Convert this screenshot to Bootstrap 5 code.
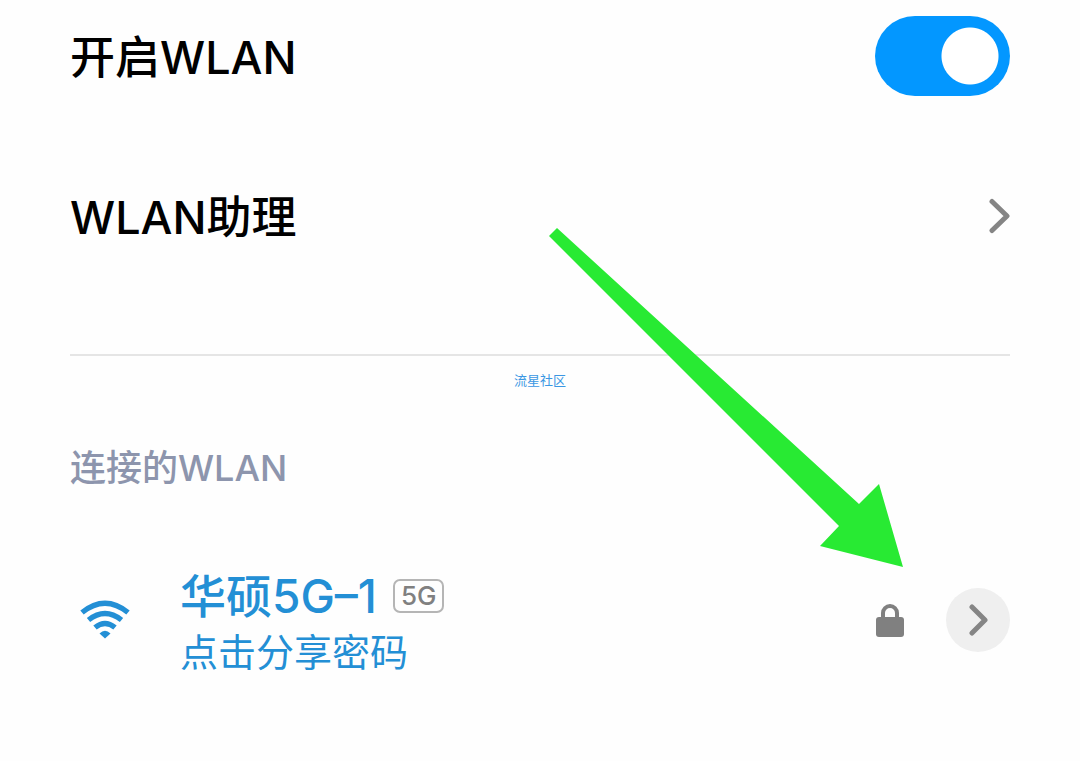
<!DOCTYPE html>
<html lang="zh-CN">
<head>
<meta charset="utf-8">
<meta name="viewport" content="width=device-width, initial-scale=1">
<title>WLAN</title>
<link href="https://cdn.jsdelivr.net/npm/bootstrap@5.3.0/dist/css/bootstrap.min.css" rel="stylesheet">
<style>
  body { font-family: Inter, "Noto Sans CJK SC", sans-serif; background: #fefefe; color: #000; }
  .settings { padding: 0 70px; }
  .setting-title { font-size: 45px; line-height: 60px; padding-top: 4px; font-weight: 500; }
  .row-switch { min-height: 112px; }
  .row-assist { min-height: 208px; margin-bottom: 34px; color: #000; }
  .divider { border-top: 2px solid #e5e5e5; opacity: 1; }
  .form-check-input.wlan-switch {
    width: 135px; height: 80px; margin: 0; border: 0; border-radius: 40px;
    background: #d9d9d9 radial-gradient(circle at 39px 50%, #fff 28px, transparent 29px);
  }
  .form-check-input.wlan-switch:checked {
    background: #0397ff radial-gradient(circle at 95px 50%, #fff 28px, transparent 29px);
  }
  .community { font-size: 13px; line-height: 24px; margin-top: 12px; color: #3b97e3; }
  .section-title { font-size: 36px; line-height: 48px; margin: 52px 0 70px; font-weight: 500; color: #8d95ad; }
  .wifi-icon { margin: 0 50px 0 10px; }
  .network, .network:hover { color: #238fd5; }
  .network-text { padding-top: 4px; }
  .network-name { font-size: 46px; line-height: 60px; font-weight: 500; }
  .network-hint { font-size: 38px; line-height: 52px; }
  .band { font-size: 26px; line-height: 30px; padding: 0 6px; border: 2px solid #b5b5b5; border-radius: 7px; color: #808080; font-weight: 500; }
  .detail-btn { width: 64px; height: 64px; margin-left: 42px; background: #efefef; }
  .pointer-arrow { top: 228px; right: 177px; pointer-events: none; }
</style>
</head>
<body>
<main class="settings position-relative">
  <div class="row-switch d-flex align-items-center justify-content-between">
    <label class="setting-title" for="wlan">开启WLAN</label>
    <div class="form-switch p-0 d-flex">
      <input class="form-check-input wlan-switch" type="checkbox" role="switch" id="wlan" checked>
    </div>
  </div>

  <a href="#assistant" class="row-assist d-flex align-items-center justify-content-between text-decoration-none">
    <span class="setting-title">WLAN助理</span>
    <svg width="22" height="36" viewBox="0 0 22 36" fill="none" stroke="#858585" stroke-width="5" stroke-linecap="round" stroke-linejoin="round" aria-hidden="true"><path d="M4 3.500 19 18 4 32.500"/></svg>
  </a>

  <hr class="divider m-0">
  <p class="community text-center mb-0">流星社区</p>

  <h2 class="section-title">连接的WLAN</h2>

  <div class="d-flex align-items-center">
    <a href="#share" class="network d-flex align-items-center flex-grow-1 text-decoration-none">
      <svg class="wifi-icon flex-shrink-0" width="50" height="40" viewBox="0 0 50 40" fill="none" stroke="#238fd5" stroke-width="5.400" aria-hidden="true">
        <path d="M2 12.500Q25-6 48 12.500M8.500 20Q25 7 41.500 20M15 27.500Q25 19.500 35 27.500"/>
        <path d="M19.500 33.500Q25 28 30.500 33.500L25 38.500Z" fill="#238fd5" stroke="none"/>
      </svg>
      <span class="network-text d-flex flex-column">
        <span class="d-flex align-items-center gap-3">
          <span class="network-name">华硕5G–1</span>
          <span class="band">5G</span>
        </span>
        <span class="network-hint">点击分享密码</span>
      </span>
    </a>
    <svg class="flex-shrink-0" width="28" height="33" viewBox="0 0 28 33" role="img" aria-label="已加密">
      <path d="M7 15V9a7 7 0 0 1 14 0v6" fill="none" stroke="#808080" stroke-width="4"/>
      <rect y="13" width="28" height="20" rx="3" fill="#808080"/>
    </svg>
    <button type="button" class="detail-btn btn rounded-circle border-0 p-0 d-flex align-items-center justify-content-center flex-shrink-0" aria-label="网络详情">
      <svg width="22" height="32" viewBox="0 0 22 32" fill="none" stroke="#858585" stroke-width="5" stroke-linecap="round" stroke-linejoin="round" aria-hidden="true"><path d="M5 3 18 16 5 29"/></svg>
    </button>
  </div>

  <svg class="pointer-arrow position-absolute" width="354" height="339" viewBox="549 228 354 339" aria-hidden="true">
    <path d="M557 228 859 504 879 484 903 567 820 546 839 526 549 236Z" fill="#28ea33"/>
  </svg>
</main>
<script src="https://cdn.jsdelivr.net/npm/bootstrap@5.3.0/dist/js/bootstrap.bundle.min.js"></script>
</body>
</html>
